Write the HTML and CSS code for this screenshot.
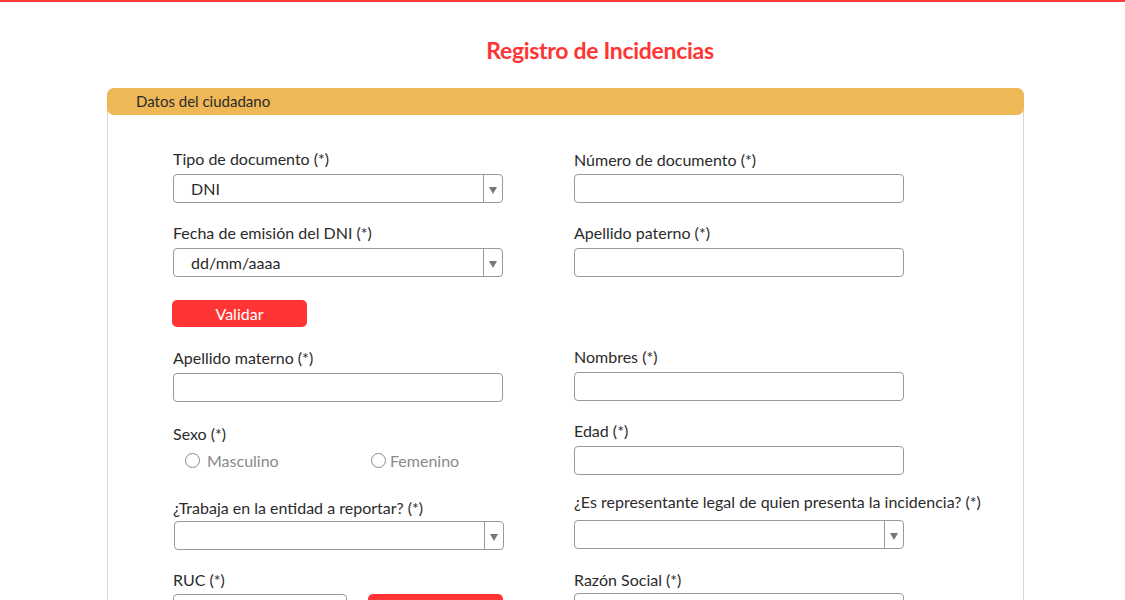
FILE: index.html
```html
<!DOCTYPE html>
<html lang="es">
<head>
<meta charset="utf-8">
<title>Registro de Incidencias</title>
<link rel="stylesheet" href="styles.css">
</head>
<body>
<div class="topline"></div>
<header class="page-title"><h1>Registro de Incidencias</h1></header>
<section class="card">
  <div class="card-head">Datos del ciudadano</div>
  <div class="card-body">
    <div class="col">
      <div class="field f1">
        <label>Tipo de documento (*)</label>
        <div class="select"><span class="val">DNI</span><span class="arrow"></span></div>
      </div>
      <div class="field f2">
        <label>Fecha de emisión del DNI (*)</label>
        <div class="select"><span class="val">dd/mm/aaaa</span><span class="arrow"></span></div>
      </div>
      <button class="btn validar">Validar</button>
      <div class="field f3">
        <label>Apellido materno (*)</label>
        <div class="input"></div>
      </div>
      <div class="field f4">
        <label>Sexo (*)</label>
        <div class="radios">
          <span class="radio r1"><span class="circle"></span>Masculino</span>
          <span class="radio r2"><span class="circle"></span>Femenino</span>
        </div>
      </div>
      <div class="field f5">
        <label>¿Trabaja en la entidad a reportar? (*)</label>
        <div class="select"><span class="val"></span><span class="arrow"></span></div>
      </div>
      <div class="field f6">
        <label>RUC (*)</label>
        <div class="ruc-row">
          <div class="input short"></div>
          <button class="btn buscar" aria-label="Buscar"></button>
        </div>
      </div>
    </div>
    <div class="col">
      <div class="field r-f1">
        <label>Número de documento (*)</label>
        <div class="input"></div>
      </div>
      <div class="field r-f2">
        <label>Apellido paterno (*)</label>
        <div class="input"></div>
      </div>
      <div class="field r-f3">
        <label>Nombres (*)</label>
        <div class="input"></div>
      </div>
      <div class="field r-f4">
        <label>Edad (*)</label>
        <div class="input"></div>
      </div>
      <div class="field r-f5">
        <label>¿Es representante legal de quien presenta la incidencia? (*)</label>
        <div class="select"><span class="val"></span><span class="arrow"></span></div>
      </div>
      <div class="field r-f6">
        <label>Razón Social (*)</label>
        <div class="input"></div>
      </div>
    </div>
  </div>
</section>
</body>
</html>
```
FILE: styles.css
```css
* { box-sizing: border-box; }
html, body { margin: 0; padding: 0; background: #fff; }
body {
  font-family: "Lato", "Liberation Sans", sans-serif;
  color: #2b2b2b;
  overflow: hidden;
  height: 600px;
}
.topline { height: 2px; background: #ff3b3b; }
.page-title {
  display: flex;
  justify-content: center;
  padding-left: 75px;
  padding-top: 33px;
  height: 86px;
}
.page-title h1 {
  margin: 0;
  font-size: 23px;
  line-height: 30px;
  font-weight: 700;
  color: #ff3535;
  letter-spacing: -0.3px;
}
.card {
  margin-left: 107px;
  width: 917px;
  border: 1px solid #d6d6d6;
  border-top: none;
  border-radius: 7px 7px 0 0;
  height: 600px;
}
.card-head {
  background: #efb857;
  height: 27px;
  border-radius: 7px;
  margin: 0 -1px;
  padding-left: 29px;
  font-size: 15px;
  line-height: 27px;
  color: #2b2b2b;
}
.card-body {
  display: flex;
  gap: 70px;
  padding-left: 65px;
  padding-top: 34px;
}
.col { display: flex; flex-direction: column; width: 331px; }
.field { display: flex; flex-direction: column; }
.field label {
  font-size: 16px;
  line-height: 20px;
  height: 20px;
  margin-bottom: 5px;
  white-space: nowrap;
}
.input, .select {
  height: 29px;
  border: 1px solid #9a9a9a;
  border-radius: 4px;
  width: 330px;
  background: #fff;
}
.select { display: flex; align-items: center; }
.select .val {
  flex: 1;
  padding-left: 17px;
  font-size: 16px;
}
.select .arrow {
  width: 19px;
  height: 100%;
  border-left: 1px solid #9a9a9a;
  position: relative;
}
.select .arrow::after {
  content: "";
  position: absolute;
  left: 5px;
  top: 12px;
  border-left: 4px solid transparent;
  border-right: 4px solid transparent;
  border-top: 7px solid #777;
}
.btn {
  font-family: inherit;
  border: none;
  background: #ff3535;
  color: #fff;
  font-size: 16px;
  border-radius: 5px;
  height: 27px;
  width: 135px;
  padding: 0;
  line-height: 27px;
}
.validar { margin-top: 23px; margin-left: -1px; }
.f2 { margin-top: 20px; }
.f3 { margin-top: 21px; }
.f4 { margin-top: 22px; }
.f4 label { margin-bottom: 6px; }
.f5 { margin-top: 28px; }
.f5 label { margin-bottom: 3px; }
.f5 .select { margin-left: 1px; }
.f6 { margin-top: 20px; }
.f6 label { margin-bottom: 4px; }
.radios { display: flex; height: 20px; align-items: center; padding-left: 12px; }
.radio {
  display: flex;
  align-items: center;
  font-size: 16px;
  color: #8a8a8a;
}
.r1 { width: 186px; }
.r1 .circle { margin-right: 7px; }
.r2 .circle { margin-right: 4px; }
.circle {
  width: 15px;
  height: 15px;
  border: 1px solid #8a8a8a;
  border-radius: 50%;
}
.ruc-row { display: flex; gap: 21px; }
.input.short { width: 174px; }
.buscar { width: 135px; margin-top: 0; height: 29px; }

.r-f1 { margin-top: 1px; }
.r-f1 label { margin-bottom: 4px; }
.r-f2 { margin-top: 20px; }
.r-f3 { margin-top: 70px; }
.r-f3 label { margin-bottom: 5px; }
.r-f4 { margin-top: 20px; }
.r-f5 { margin-top: 17px; }
.r-f5 label { margin-bottom: 8px; }
.r-f6 { margin-top: 21px; }
.r-f6 label { margin-bottom: 3px; }
```
